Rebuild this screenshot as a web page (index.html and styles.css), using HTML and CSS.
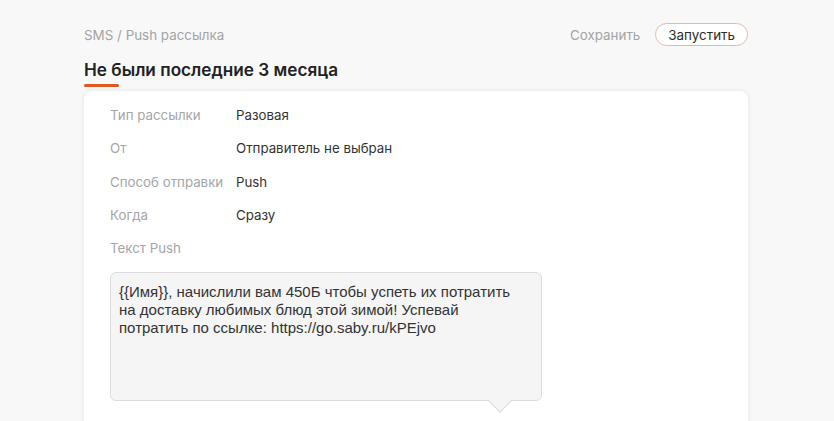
FILE: index.html
```html
<!DOCTYPE html>
<html lang="ru">
<head>
<meta charset="utf-8">
<link rel="stylesheet" href="styles.css">
</head>
<body>
<div class="page">
  <div class="top">
    <div class="crumb">SMS / Push рассылка</div>
    <div class="actions">
      <span class="save">Сохранить</span>
      <span class="run">Запустить</span>
    </div>
  </div>
  <h1 class="title">Не были последние 3 месяца</h1>
  <div class="card">
    <div class="rows">
      <div class="row"><span class="label">Тип рассылки</span><span class="value">Разовая</span></div>
      <div class="row"><span class="label">От</span><span class="value">Отправитель не выбран</span></div>
      <div class="row"><span class="label">Способ отправки</span><span class="value">Push</span></div>
      <div class="row"><span class="label">Когда</span><span class="value">Сразу</span></div>
      <div class="row"><span class="label">Текст Push</span></div>
    </div>
    <div class="bubble">{{Имя}}, начислили вам 450Б чтобы успеть их потратить на доставку любимых блюд этой зимой! Успевай потратить по ссылке: https://go.saby.ru/kPEjvo</div>
  </div>
</div>
</body>
</html>
```
FILE: styles.css
```css
* { box-sizing: border-box; }
html, body { margin: 0; padding: 0; }
body {
  background: #f8f8f8;
  font-family: Inter, "Noto Sans", sans-serif;
  color: #313131;
  width: 834px;
  height: 421px;
  overflow: hidden;
}
.page {
  width: 664px;
  margin-left: 84px;
  padding-top: 23px;
}
.top {
  display: flex;
  justify-content: space-between;
  align-items: center;
  height: 23px;
}
.crumb {
  font-size: 13.4px;
  color: #a3a3a3;
}
.actions {
  display: flex;
  align-items: center;
  gap: 15px;
}
.save {
  font-size: 13.4px;
  color: #a3a3a3;
}
.run {
  height: 23px;
  padding: 0 12px;
  border: 1.5px solid #f1b69a;
  border-radius: 12px;
  font-size: 13.4px;
  color: #2b2b2b;
  display: flex;
  align-items: center;
  background: #fff;
}
.title {
  margin: 13px 0 0;
  font-size: 17.2px;
  font-weight: 600;
  color: #222;
  line-height: 22px;
  position: relative;
  padding-bottom: 6px;
}
.title::after {
  content: "";
  position: absolute;
  left: 0;
  bottom: 0;
  width: 35px;
  height: 3px;
  border-radius: 2px;
  background: #e0581f;
}
.card {
  margin-top: 4px;
  background: #fff;
  border-radius: 8px;
  box-shadow: 0 0 4px rgba(0,0,0,0.09);
  padding: 16px 26px 40px;
  height: 360px;
}
.rows {
  display: flex;
  flex-direction: column;
}
.row {
  display: flex;
  height: 33.3px;
  align-items: flex-start;
  font-size: 13.3px;
  line-height: 16px;
}
.label {
  width: 126px;
  color: #a4a6a8;
}
.value {
  color: #333;
}
.bubble {
  position: relative;
  margin-top: -1px;
  width: 432px;
  height: 129px;
  background: #f5f5f5;
  border: 1px solid #dcdcdc;
  border-radius: 6px;
  padding: 10px 18px 10px 8px;
  font-family: "Liberation Sans", Arial, sans-serif;
  font-size: 15px;
  line-height: 18px;
  color: #333;
}
.bubble::after {
  content: "";
  position: absolute;
  left: 380px;
  bottom: -9px;
  width: 17px;
  height: 17px;
  background: #f5f5f5;
  border-right: 1px solid #dcdcdc;
  border-bottom: 1px solid #dcdcdc;
  transform: rotate(45deg);
}
```
